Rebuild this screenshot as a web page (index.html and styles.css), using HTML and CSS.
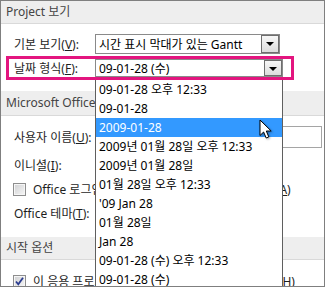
FILE: index.html
```html
<!DOCTYPE html>
<html lang="ko">
<head>
    <meta charset="UTF-8">
    <title>Project 옵션</title>
    <link rel="stylesheet" href="styles.css">
</head>
<body>
    <div class="frame">
        <div class="band">Project 보기</div>
        <div class="group">
            <div class="row row-view">
                <span class="label">기본 보기(<u>V</u>):</span>
                <div class="combo combo-view">
                    <span class="combo-text">시간 표시 막대가 있는 Gantt</span>
                    <span class="drop-btn"></span>
                </div>
            </div>
            <div class="row row-date marked">
                <span class="label">날짜 형식(<u>F</u>):</span>
                <div class="combo combo-date">
                    <span class="combo-text">09-01-28 (수)</span>
                    <span class="drop-btn"></span>
                    <ul class="droplist">
                        <li>09-01-28 오후 12:33</li>
                        <li>09-01-28</li>
                        <li class="selected">2009-01-28</li>
                        <li>2009년 01월 28일 오후 12:33</li>
                        <li>2009년 01월 28일</li>
                        <li>01월 28일 오후 12:33</li>
                        <li>'09 Jan 28</li>
                        <li>01월 28일</li>
                        <li>Jan 28</li>
                        <li>09-01-28 (수) 오후 12:33</li>
                        <li>09-01-28 (수)</li>
                        <li>01/28</li>
                    </ul>
                </div>
            </div>
        </div>

        <div class="band band-tall">Microsoft Office 사용자 지정</div>
        <div class="group group-office">
            <div class="row">
                <span class="label">사용자 이름(<u>U</u>):</span>
                <span class="textbox textbox-name"></span>
            </div>
            <div class="row row-gap">
                <span class="label">이니셜(<u>I</u>):</span>
                <span class="textbox textbox-short"></span>
            </div>
            <div class="row row-check row-tight">
                <span class="check"></span>
                <span class="check-label">Office 로그인 상태와 관계없이 항상 이 값을 사용(<u>A</u>)</span>
            </div>
            <div class="row row-tight">
                <span class="label">Office 테마(<u>T</u>):</span>
                <span class="textbox textbox-short"></span>
            </div>
        </div>

        <div class="band">시작 옵션</div>
        <div class="group">
            <div class="row row-check">
                <span class="check checked">
                    <svg width="11" height="11" viewBox="0 0 11 11"><path d="M2 5.5 L4.3 8.3 L9 1.8" fill="none" stroke="#2b3c8f" stroke-width="1.8"/></svg>
                </span>
                <span class="check-label">이 응용 프로그램을 시작할 때 항상 시작 화면 표시(<u>H</u>)</span>
            </div>
        </div>

        <svg class="cursor" width="15" height="22" viewBox="0 0 15 22">
            <path d="M1 1 V16.5 L4.6 13 L7.2 19 L9.8 17.9 L7.3 12 H12.2 Z" fill="#fff" stroke="#000" stroke-width="1" stroke-linejoin="round"/>
        </svg>
    </div>
</body>
</html>
```

FILE: styles.css
```css
* {
    margin: 0;
    padding: 0;
    box-sizing: border-box;
}

body {
    background: #fff;
    font-family: "Noto Sans", "Noto Sans CJK KR", sans-serif;
    font-size: 12px;
    color: #1e1e1e;
}

u {
    text-decoration: underline;
    text-underline-offset: 1px;
}

.frame {
    position: relative;
    width: 325px;
    height: 287px;
    border: 1px solid #7f7f7f;
    overflow: hidden;
    background: #fff;
}

/* 구역 제목 */
.band {
    height: 23px;
    line-height: 22px;
    padding-left: 5px;
    background: #eeeeee;
    border-bottom: 1px solid #d9d9d9;
    color: #444;
    white-space: nowrap;
}

.band-tall {
    height: 25px;
    line-height: 24px;
}

.group {
    padding: 10px 0 14px;
}

.group-office {
    padding-bottom: 13px;
}

.row {
    display: flex;
    align-items: center;
    height: 22px;
    padding-left: 13px;
    white-space: nowrap;
}

.row-view {
    height: 20px;
}

.row-date {
    height: 18px;
    margin-top: 5px;
}

.row-gap {
    margin-top: 6px;
}

.row-tight {
    margin-top: 2px;
}

.label {
    flex: none;
    width: 81px;
}

/* 강조 표시 */
.marked {
    position: relative;
}

.marked::after {
    content: "";
    position: absolute;
    top: -3px;
    bottom: -3px;
    left: 5px;
    width: 282px;
    border: 3px solid #e3157f;
    z-index: 3;
    pointer-events: none;
}

.combo {
    position: relative;
    display: flex;
    align-items: center;
    height: 100%;
    padding-left: 3px;
    border: 1px solid #8a8a8a;
    background: #fff;
    color: #000;
}

.combo-view {
    width: 185px;
}

.combo-date {
    width: 188px;
}

.combo-text {
    flex: 1;
    overflow: hidden;
}

.drop-btn {
    position: relative;
    flex: none;
    width: 18px;
    height: 100%;
    border: 1px solid #6e6e6e;
    background: linear-gradient(#f7f7f7, #dcdcdc);
}

.drop-btn::after {
    content: "";
    position: absolute;
    left: 4px;
    top: 6px;
    border-left: 4px solid transparent;
    border-right: 4px solid transparent;
    border-top: 4px solid #000;
}

.droplist {
    position: absolute;
    top: calc(100% + 3px);
    left: -1px;
    width: 188px;
    list-style: none;
    background: #fff;
    border: 1px solid #5f5f5f;
    z-index: 2;
}

.droplist li {
    height: 19px;
    line-height: 19px;
    padding-left: 3px;
    color: #000;
    white-space: nowrap;
}

.droplist li.selected {
    background: #3399ff;
    color: #fff;
}

.textbox {
    height: 22px;
    border: 1px solid #a5a5a5;
    background: #fff;
}

.textbox-name {
    width: 227px;
}

.textbox-short {
    width: 70px;
}

.row-check {
    padding-left: 12px;
}

.check {
    flex: none;
    display: flex;
    align-items: center;
    justify-content: center;
    width: 13px;
    height: 13px;
    border: 1px solid #8e8e8e;
    box-shadow: inset 0 0 0 1px #f6f6f6;
    background: linear-gradient(135deg, #cfd0d2, #f7f7f7);
}

.check-label {
    margin-left: 7px;
}

.cursor {
    position: absolute;
    left: 258px;
    top: 118px;
    z-index: 4;
    filter: drop-shadow(1px 1px 1px rgba(0, 0, 0, 0.35));
}
```
